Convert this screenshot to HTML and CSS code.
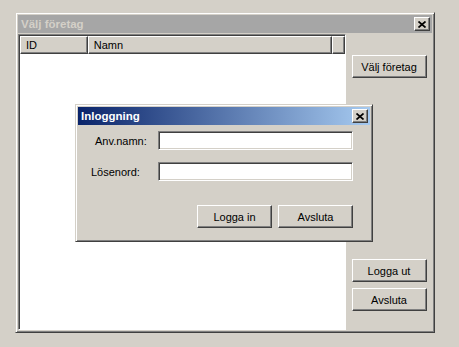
FILE: index.html
```html
<!DOCTYPE html>
<html lang="sv">
<head>
  <meta charset="UTF-8" />
  <title>Välj företag</title>
  <link rel="stylesheet" href="styles.css">
</head>
<body>
  <div class="window main-window">
    <div class="titlebar inactive">
      <span class="title">Välj företag</span>
      <button class="close-btn" aria-label="Stäng">
        <svg width="8" height="7" viewBox="0 0 8 7"><path d="M0.5 0.5 L7.5 6.5 M7.5 0.5 L0.5 6.5" stroke="#000" stroke-width="1.7"/></svg>
      </button>
    </div>
    <div class="window-body">
      <div class="listview">
        <div class="list-header">
          <div class="col col-id">ID</div>
          <div class="col col-name">Namn</div>
          <div class="col col-fill"></div>
        </div>
        <div class="list-rows"></div>
      </div>
      <div class="side-panel">
        <button class="btn">Välj företag</button>
        <div class="bottom-buttons">
          <button class="btn">Logga ut</button>
          <button class="btn">Avsluta</button>
        </div>
      </div>
    </div>
  </div>

  <div class="window login-dialog">
    <div class="titlebar active">
      <span class="title">Inloggning</span>
      <button class="close-btn" aria-label="Stäng">
        <svg width="8" height="7" viewBox="0 0 8 7"><path d="M0.5 0.5 L7.5 6.5 M7.5 0.5 L0.5 6.5" stroke="#000" stroke-width="1.7"/></svg>
      </button>
    </div>
    <form class="login-form" onsubmit="return false;">
      <div class="form-row">
        <label for="user" class="user-label">Anv.namn:</label>
        <input type="text" id="user" class="field">
      </div>
      <div class="form-row">
        <label for="pass">Lösenord:</label>
        <input type="password" id="pass" class="field">
      </div>
      <div class="form-buttons">
        <button type="submit" class="btn">Logga in</button>
        <button type="button" class="btn">Avsluta</button>
      </div>
    </form>
  </div>
</body>
</html>
```

FILE: styles.css
```css
:root {
  --face: #d4d0c8;
  --shadow: #808080;
  --dark: #404040;
}

* {
  box-sizing: border-box;
}

body {
  margin: 0;
  width: 459px;
  height: 347px;
  background: var(--face);
  font-family: "Liberation Sans", Arial, sans-serif;
  font-size: 11px;
  color: #000;
  position: relative;
  overflow: hidden;
}

/* classic raised window frame */
.window {
  background: var(--face);
  border: 1px solid;
  border-color: var(--face) var(--dark) var(--dark) var(--face);
  box-shadow: inset 1px 1px #fff, inset -1px -1px var(--shadow);
  padding: 2px;
  display: flex;
  flex-direction: column;
}

.main-window {
  margin: 12px 0 0 15px;
  width: 420px;
  height: 321px;
}

.titlebar {
  height: 18px;
  display: flex;
  align-items: center;
  justify-content: space-between;
  padding: 0 2px 0 3px;
  flex-shrink: 0;
}

.titlebar.inactive {
  background: #a6a6a6;
  color: var(--face);
}

.titlebar.active {
  background: linear-gradient(to right, #0a246a, #a6caf0);
  color: #fff;
}

.title {
  font-weight: bold;
  font-size: 11.5px;
}

.close-btn {
  width: 16px;
  height: 14px;
  padding: 0;
  background: var(--face);
  border: 1px solid;
  border-color: #fff var(--dark) var(--dark) #fff;
  box-shadow: inset -1px -1px var(--shadow);
  display: flex;
  align-items: center;
  justify-content: center;
}

.window-body {
  flex: 1;
  display: flex;
  margin-top: 1px;
}

/* list view */
.listview {
  width: 328px;
  display: flex;
  flex-direction: column;
  background: #fff;
  border: 1px solid;
  border-color: var(--shadow) #fff #fff var(--shadow);
  box-shadow: inset 1px 1px var(--dark);
  padding: 1px 0 0 1px;
}

.list-header {
  display: flex;
  height: 18px;
}

.col {
  background: var(--face);
  border-top: 1px solid #fff;
  border-left: 1px solid #fff;
  border-right: 1px solid var(--dark);
  border-bottom: 1px solid var(--dark);
  box-shadow: inset -1px -1px var(--shadow);
  padding: 2px 0 0 5px;
}

.col-id {
  width: 68px;
}

.col-name {
  width: 245px;
}

.col-fill {
  width: 13px;
}

.list-rows {
  flex: 1;
}

/* side buttons */
.side-panel {
  flex: 1;
  display: flex;
  flex-direction: column;
  align-items: center;
  padding: 21px 0 19px;
}

.bottom-buttons {
  margin-top: auto;
  display: flex;
  flex-direction: column;
  gap: 6px;
}

.btn {
  width: 75px;
  height: 23px;
  background: var(--face);
  font-family: "Liberation Sans", Arial, sans-serif;
  font-size: 11px;
  color: #000;
  border: 1px solid;
  border-color: #fff var(--dark) var(--dark) #fff;
  box-shadow: inset -1px -1px var(--shadow);
  padding: 0;
}

/* login dialog */
.login-dialog {
  position: absolute;
  left: 75px;
  top: 104px;
  width: 298px;
  height: 138px;
}

.login-form {
  padding: 6px 17px 0 13px;
}

.form-row {
  display: flex;
  align-items: center;
  margin-bottom: 12px;
}

.form-row label {
  width: 68px;
}

.user-label {
  padding-left: 4px;
}

.field {
  width: 196px;
  height: 19px;
  background: #fff;
  border: 1px solid;
  border-color: var(--shadow) #fff #fff var(--shadow);
  box-shadow: inset 1px 1px var(--dark), inset -1px -1px var(--face);
  padding: 0 3px;
  font-family: "Liberation Sans", Arial, sans-serif;
  font-size: 11px;
  outline: none;
}

.form-buttons {
  display: flex;
  justify-content: flex-end;
  gap: 6px;
  margin-top: 24px;
}
```
